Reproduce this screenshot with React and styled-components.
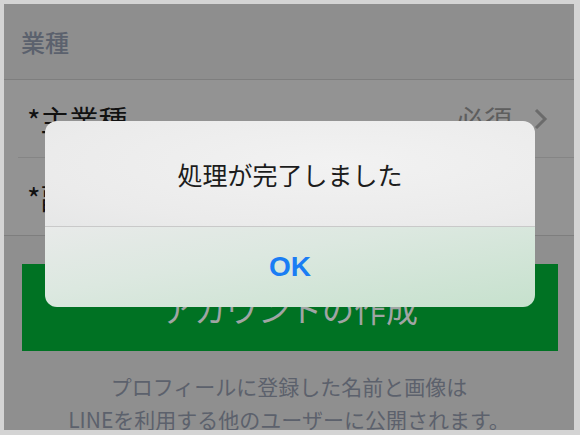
import React from "react";
import styled, { createGlobalStyle } from "styled-components";

const GlobalStyle = createGlobalStyle`
  html, body {
    margin: 0;
    padding: 0;
    background: #d4d4d4;
  }
  body {
    font-family: "Noto Sans CJK JP", "Noto Sans", sans-serif;
  }
`;

const Frame = styled.div`
  width: 580px;
  height: 435px;
  box-sizing: border-box;
  padding: 4px 6px 5px 4px;
  background: #d4d4d4;
`;

const Screen = styled.div`
  position: relative;
  height: 100%;
  background: #8f8f8f;
  overflow: hidden;
`;

const SectionHeader = styled.div`
  height: 76px;
  box-sizing: border-box;
  padding: 0 0 0 17px;
  display: flex;
  align-items: center;
  font-size: 24px;
  font-weight: 500;
  color: #5b616d;
  background: #8e8e8e;
  border-bottom: 1px solid #7e7e7e;
`;

const Rows = styled.div`
  background: #939393;
  border-bottom: 1px solid #7e7e7e;
`;

const Row = styled.div`
  height: 77px;
  margin-left: ${(p) => (p.$last ? "0" : "14px")};
  padding-left: ${(p) => (p.$last ? "23px" : "9px")};
  padding-right: 26px;
  display: flex;
  align-items: center;
  justify-content: space-between;
  border-bottom: ${(p) => (p.$last ? "none" : "1px solid #858585")};
  font-size: 29px;
  color: #111;
`;

const RowRight = styled.div`
  display: flex;
  align-items: center;
  gap: 22px;
  font-size: 28px;
  color: #5e5e5e;
`;

const CreateButton = styled.div`
  margin: 28px 16px 0 18px;
  height: 87px;
  background: #007223;
  display: flex;
  align-items: center;
  justify-content: center;
  font-size: 32px;
  color: #a0a5a4;
`;

const Note = styled.div`
  margin-top: 19px;
  text-align: center;
  font-size: 21px;
  line-height: 33px;
  color: #5c616c;
`;

const Dialog = styled.div`
  position: absolute;
  left: 41px;
  top: 117px;
  width: 490px;
  height: 186px;
  border-radius: 12px;
  overflow: hidden;
  display: flex;
  flex-direction: column;
`;

const DialogTitle = styled.div`
  height: 105px;
  display: flex;
  align-items: center;
  justify-content: center;
  font-size: 25px;
  color: #1c1c1c;
  background: radial-gradient(ellipse at 60% 40%, #f2f2f2 0%, #ebebeb 70%, #e6e7e7 100%);
  border-bottom: 1px solid #c9c9c9;
`;

const DialogAction = styled.div`
  flex: 1;
  display: flex;
  align-items: center;
  justify-content: center;
  font-family: "Liberation Sans", Arial, sans-serif;
  font-weight: bold;
  font-size: 28px;
  color: #1a7df4;
  background: linear-gradient(170deg, #e8eae9 0%, #dce8e0 40%, #c6e1cd 100%);
`;

function Chevron() {
  return (
    <svg width="14" height="22" viewBox="0 0 14 22">
      <path d="M2 2 L11 11 L2 20" fill="none" stroke="#6b6b6b" strokeWidth="3" />
    </svg>
  );
}

export default function App() {
  return (
    <>
      <GlobalStyle />
      <Frame>
        <Screen>
          <SectionHeader>業種</SectionHeader>
          <Rows>
            <Row>
              <span>*主業種</span>
              <RowRight>
                必須
                <Chevron />
              </RowRight>
            </Row>
            <Row $last>
              <span>*副業種</span>
            </Row>
          </Rows>
          <CreateButton>アカウントの作成</CreateButton>
          <Note>
            プロフィールに登録した名前と画像は
            <br />
            LINEを利用する他のユーザーに公開されます。
          </Note>
          <Dialog>
            <DialogTitle>処理が完了しました</DialogTitle>
            <DialogAction>OK</DialogAction>
          </Dialog>
        </Screen>
      </Frame>
    </>
  );
}
